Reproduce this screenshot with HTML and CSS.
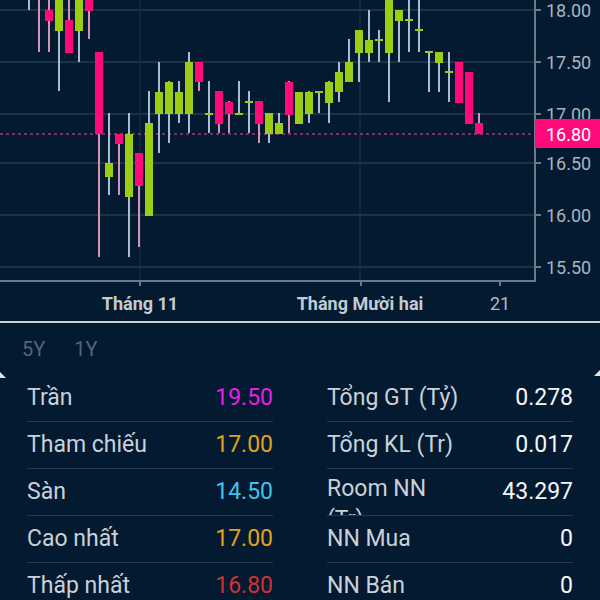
FILE: index.html
```html
<!DOCTYPE html>
<html lang="vi">
<head>
<meta charset="utf-8">
<title>Chart</title>
<link rel="stylesheet" href="styles.css">
</head>
<body>
<div class="screen">
  <svg class="chart" width="600" height="321" viewBox="0 0 600 321" xmlns="http://www.w3.org/2000/svg">
    <g class="vgrid">
      <rect x="139" y="0" width="2" height="280"/>
      <rect x="359" y="0" width="2" height="280"/>
    </g>
    <g class="hgrid">
      <rect x="0" y="9" width="534" height="2"/>
      <rect x="0" y="61" width="534" height="2"/>
      <rect x="0" y="113" width="534" height="2"/>
      <rect x="0" y="162" width="534" height="2"/>
      <rect x="0" y="214" width="534" height="2"/>
      <rect x="0" y="266" width="534" height="2"/>
    </g>
    <line class="lastline" x1="0" y1="134" x2="535" y2="134"/>

    <!-- candles: wicks -->
    <g class="wick">
      <rect x="28" y="0" width="2" height="10"/>
      <rect x="58" y="0" width="2" height="91"/>
      <rect x="78" y="0" width="2" height="62"/>
      <rect x="108" y="113" width="2" height="82"/>
      <rect x="128" y="113" width="2" height="144"/>
      <rect x="148" y="91" width="2" height="125"/>
      <rect x="158" y="62" width="2" height="91"/>
      <rect x="168" y="81" width="2" height="62"/>
      <rect x="178" y="81" width="2" height="42"/>
      <rect x="188" y="52" width="2" height="81"/>
      <rect x="208" y="81" width="2" height="52"/>
      <rect x="238" y="81" width="2" height="33"/>
      <rect x="248" y="91" width="2" height="42"/>
      <rect x="268" y="113" width="2" height="30"/>
      <rect x="278" y="113" width="2" height="21"/>
      <rect x="308" y="91" width="2" height="32"/>
      <rect x="318" y="91" width="2" height="22"/>
      <rect x="328" y="81" width="2" height="42"/>
      <rect x="338" y="62" width="2" height="40"/>
      <rect x="348" y="39" width="2" height="43"/>
      <rect x="358" y="30" width="2" height="52"/>
      <rect x="368" y="10" width="2" height="52"/>
      <rect x="378" y="30" width="2" height="32"/>
      <rect x="388" y="0" width="2" height="102"/>
      <rect x="398" y="10" width="2" height="52"/>
      <rect x="408" y="0" width="2" height="52"/>
      <rect x="418" y="0" width="2" height="52"/>
      <rect x="428" y="52" width="2" height="40"/>
      <rect x="438" y="52" width="2" height="40"/>
      <rect x="448" y="52" width="2" height="50"/>
    </g>
    <g class="wick-down">
      <rect x="38" y="0" width="2" height="52"/>
      <rect x="48" y="0" width="2" height="52"/>
      <rect x="68" y="0" width="2" height="53"/>
      <rect x="88" y="0" width="2" height="39"/>
      <rect x="98" y="52" width="2" height="205"/>
      <rect x="118" y="134" width="2" height="61"/>
      <rect x="138" y="153" width="2" height="94"/>
      <rect x="198" y="62" width="2" height="29"/>
      <rect x="218" y="91" width="2" height="42"/>
      <rect x="228" y="101" width="2" height="32"/>
      <rect x="258" y="101" width="2" height="42"/>
      <rect x="288" y="81" width="2" height="52"/>
      <rect x="478" y="113" width="2" height="21"/>
    </g>

    <!-- candles: bodies -->
    <g class="up">
      <rect x="55" y="0" width="8" height="31"/>
      <rect x="75" y="0" width="8" height="31"/>
      <rect x="105" y="163" width="8" height="14"/>
      <rect x="125" y="134" width="8" height="63"/>
      <rect x="145" y="123" width="8" height="93"/>
      <rect x="155" y="92" width="8" height="22"/>
      <rect x="165" y="82" width="8" height="32"/>
      <rect x="175" y="92" width="8" height="22"/>
      <rect x="185" y="62" width="8" height="52"/>
      <rect x="265" y="113" width="8" height="21"/>
      <rect x="275" y="123" width="8" height="11"/>
      <rect x="295" y="92" width="8" height="32"/>
      <rect x="305" y="92" width="8" height="22"/>
      <rect x="325" y="82" width="8" height="21"/>
      <rect x="335" y="72" width="8" height="20"/>
      <rect x="345" y="62" width="8" height="20"/>
      <rect x="355" y="30" width="8" height="23"/>
      <rect x="365" y="40" width="8" height="13"/>
      <rect x="385" y="0" width="8" height="53"/>
      <rect x="395" y="10" width="8" height="11"/>
      <rect x="435" y="52" width="8" height="11"/>
      <!-- doji ticks -->
      <rect x="205" y="113" width="8" height="2"/>
      <rect x="235" y="113" width="8" height="2"/>
      <rect x="245" y="101" width="8" height="2"/>
      <rect x="315" y="91" width="8" height="2"/>
      <rect x="375" y="39" width="8" height="2"/>
      <rect x="405" y="19" width="8" height="2"/>
      <rect x="415" y="29" width="8" height="2"/>
      <rect x="425" y="51" width="8" height="2"/>
      <rect x="445" y="71" width="8" height="2"/>
    </g>
    <g class="down">
      <rect x="45" y="10" width="8" height="11"/>
      <rect x="65" y="20" width="8" height="33"/>
      <rect x="85" y="0" width="8" height="11"/>
      <rect x="95" y="52" width="8" height="82"/>
      <rect x="115" y="134" width="8" height="10"/>
      <rect x="135" y="153" width="8" height="33"/>
      <rect x="195" y="62" width="8" height="20"/>
      <rect x="215" y="91" width="8" height="33"/>
      <rect x="225" y="102" width="8" height="12"/>
      <rect x="255" y="101" width="8" height="23"/>
      <rect x="285" y="82" width="8" height="33"/>
      <rect x="455" y="62" width="8" height="41"/>
      <rect x="465" y="72" width="8" height="52"/>
      <rect x="475" y="123" width="8" height="11"/>
    </g>

    <!-- axes -->
    <g class="axis">
      <rect x="534" y="0" width="2" height="282"/>
      <rect x="0" y="280" width="536" height="2"/>
      <rect x="536" y="9" width="5" height="2"/>
      <rect x="536" y="61" width="5" height="2"/>
      <rect x="536" y="113" width="5" height="2"/>
      <rect x="536" y="162" width="5" height="2"/>
      <rect x="536" y="214" width="5" height="2"/>
      <rect x="536" y="266" width="5" height="2"/>
      <rect x="139" y="282" width="2" height="4"/>
      <rect x="360" y="282" width="2" height="4"/>
      <rect x="499" y="282" width="2" height="4"/>
    </g>
    <g class="ylabels">
      <text x="546" y="16.5">18.00</text>
      <text x="546" y="68.5">17.50</text>
      <text x="546" y="120.5">17.00</text>
      <text x="546" y="169.5">16.50</text>
      <text x="546" y="221.5">16.00</text>
      <text x="546" y="273.5">15.50</text>
    </g>
    <rect class="pricebox" x="535" y="119" width="65" height="29"/>
    <text class="pricetext" x="546" y="140.5">16.80</text>
    <g class="xlabels">
      <text x="140" y="310">Tháng 11</text>
      <text x="360" y="310">Tháng Mười hai</text>
      <text class="xlabel-day" x="500" y="310">21</text>
    </g>
  </svg>

  <div class="divider"></div>

  <div class="ranges">
    <span class="range">5Y</span>
    <span class="range">1Y</span>
  </div>

  <div class="stats">
    <div class="col">
      <div class="row"><span class="label">Trần</span><span class="value ceil">19.50</span></div>
      <div class="row"><span class="label">Tham chiếu</span><span class="value ref">17.00</span></div>
      <div class="row"><span class="label">Sàn</span><span class="value floor">14.50</span></div>
      <div class="row"><span class="label">Cao nhất</span><span class="value ref">17.00</span></div>
      <div class="row"><span class="label">Thấp nhất</span><span class="value low">16.80</span></div>
    </div>
    <div class="col">
      <div class="row"><span class="label">Tổng GT (Tỷ)</span><span class="value">0.278</span></div>
      <div class="row"><span class="label">Tổng KL (Tr)</span><span class="value">0.017</span></div>
      <div class="row row--wrap"><span class="label">Room NN (Tr)</span><span class="value">43.297</span></div>
      <div class="row"><span class="label">NN Mua</span><span class="value">0</span></div>
      <div class="row"><span class="label">NN Bán</span><span class="value">0</span></div>
    </div>
  </div>
</div>
</body>
</html>
```
FILE: styles.css
```css
html, body {
  margin: 0;
  padding: 0;
  background: #041a30;
}

.screen {
  width: 600px;
  height: 600px;
  overflow: hidden;
  background: #041a30;
  font-family: Roboto, "Noto Sans", "DejaVu Sans", sans-serif;
  position: relative;
}

.chart {
  display: block;
  width: 600px;
  height: 321px;
}

.vgrid rect { fill: #0f263c; }
.hgrid rect { fill: #1c3246; }

.lastline {
  stroke: #a23a80;
  stroke-width: 1.5;
  stroke-dasharray: 3 3;
}

.wick rect { fill: #a9bfd1; }
.wick-down rect { fill: #d494b6; }
.up rect { fill: #9ccc14; }
.down rect { fill: #ff0a7a; }

.axis rect { fill: #6e7a86; }

.ylabels text {
  font-family: Roboto, sans-serif;
  font-size: 18px;
  fill: #aab4be;
}

.pricebox { fill: #ff0a7a; }
.pricetext {
  font-family: Roboto, sans-serif;
  font-size: 18px;
  fill: #ffffff;
}

.xlabels text {
  font-family: Roboto, sans-serif;
  font-size: 18px;
  font-weight: 700;
  fill: #c3cbd3;
  text-anchor: middle;
}

.xlabels .xlabel-day {
  font-weight: 400;
  fill: #b3bcc6;
}

.divider {
  height: 2px;
  background: #c9d1d9;
}

.ranges {
  height: 52px;
  display: flex;
  align-items: center;
  gap: 29px;
  padding-left: 22px;
  font-size: 20px;
  color: #52657a;
  position: relative;
}

.ranges::before,
.ranges::after {
  content: "";
  position: absolute;
  width: 6px;
  height: 6px;
  background: #dfe5ea;
}

.ranges::before {
  left: 0;
  top: 49px;
  clip-path: polygon(0 0, 100% 100%, 0 100%);
}

.ranges::after {
  right: 0;
  top: 47px;
  clip-path: polygon(100% 0, 100% 100%, 0 100%);
}

.stats {
  display: grid;
  grid-template-columns: 246px 246px;
  column-gap: 54px;
  padding: 0 27px;
}

.row {
  box-sizing: border-box;
  height: 47px;
  display: flex;
  justify-content: space-between;
  align-items: center;
  border-bottom: 1px solid #253a4f;
  overflow: hidden;
  font-size: 23px;
  line-height: 28px;
}

.label {
  color: #c9d1d9;
  max-width: 135px;
}

.row--wrap .label {
  align-self: flex-start;
  padding-top: 4px;
  line-height: 31px;
  height: 42px;
  overflow: hidden;
}

.value { color: #f4f7fa; }
.value.ceil { color: #e620e6; }
.value.ref { color: #e1a31e; }
.value.floor { color: #3fc3ec; }
.value.low { color: #cc3333; }
```
